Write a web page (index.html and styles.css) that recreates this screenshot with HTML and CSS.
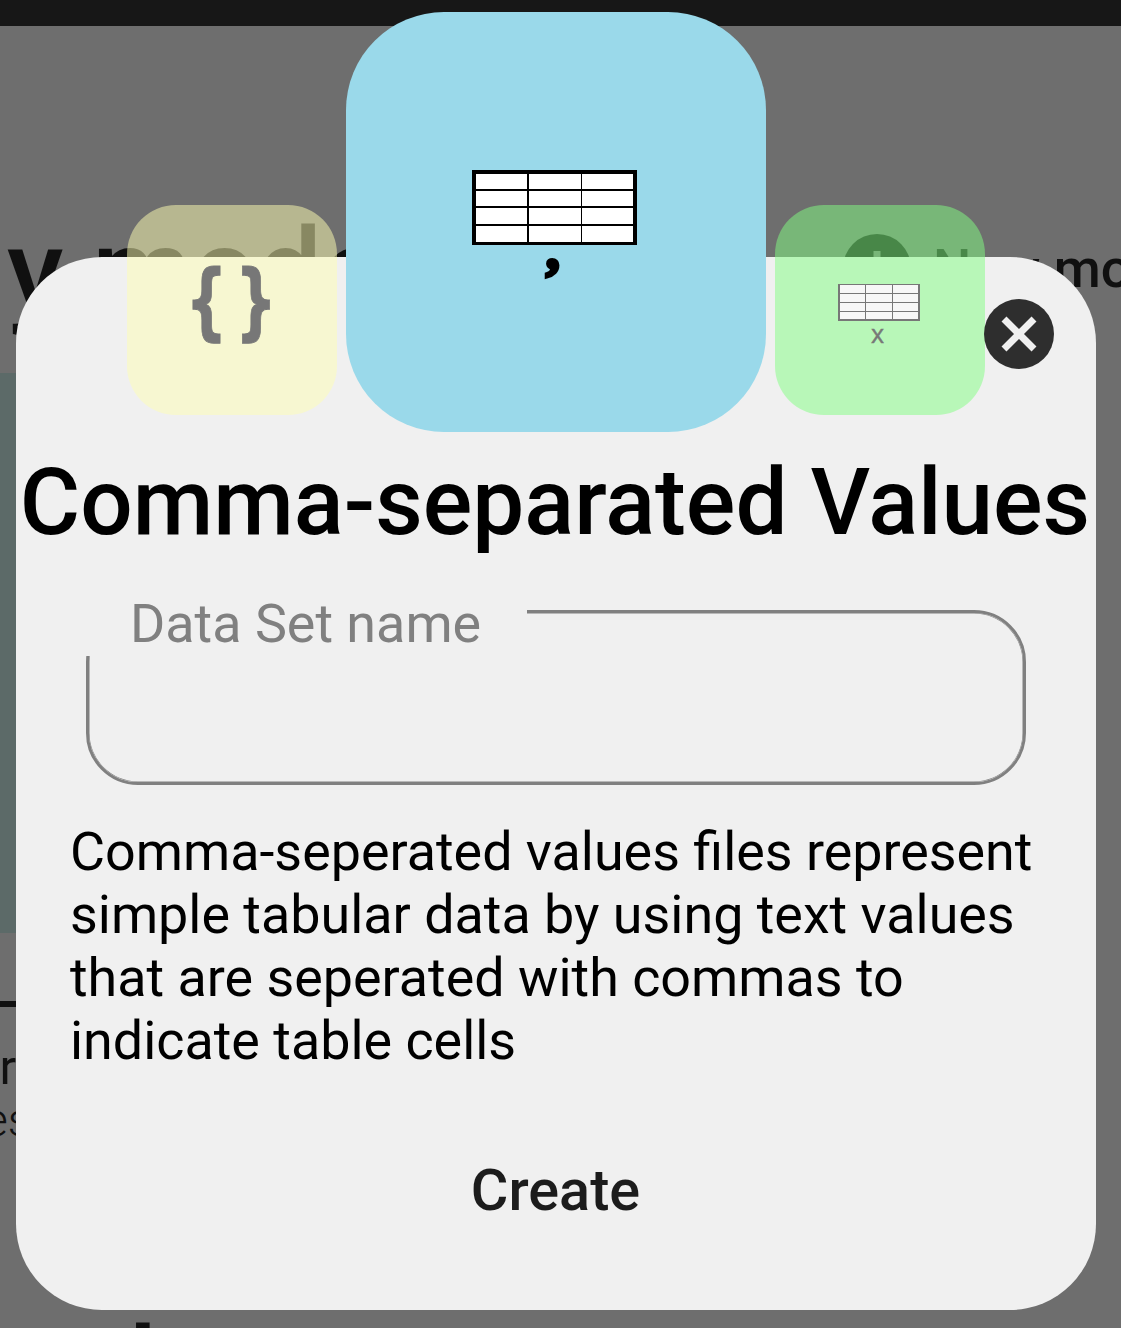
FILE: index.html
```html
<!DOCTYPE html>
<html lang="en">
<head>
<meta charset="utf-8">
<title>Create data set</title>
<link rel="stylesheet" href="styles.css">
</head>
<body>
<div class="app">
  <div class="statusbar"></div>
  <header class="header">
    <h1 class="page-title">y models</h1>
    <div class="new-model">
      <svg width="68" height="68" viewBox="0 0 68 68"><circle cx="34" cy="34" r="34" fill="#0f0f0f"/><path d="M34 17v34M17 34h34" stroke="#6e6e6e" stroke-width="7"/></svg>
      <span>New model</span>
    </div>
  </header>
  <div class="preview"></div>
  <div class="rule"></div>
  <div class="item-title">r</div>
  <div class="item-sub">es</div>
  <h2 class="next-title">d</h2>
</div>

<main class="dialog">
  <div class="tiles">
    <div class="tile tile-json">
      <svg width="210" height="210" viewBox="0 0 210 210"><g class="brace"><text x="58.5" y="125" textLength="42" lengthAdjust="spacingAndGlyphs">{</text><text x="108" y="125" textLength="42" lengthAdjust="spacingAndGlyphs">}</text></g></svg>
    </div>
    <div class="tile tile-csv">
      <svg width="420" height="420" viewBox="0 0 420 420" shape-rendering="crispEdges">
        <path fill="#000" d="M126 158h165v75H126z"/>
        <path fill="#fff" d="M130 162h51v15h-51zM183 162h52v15h-52zM236 162h51v15h-51zM130 179h51v15h-51zM183 179h52v15h-52zM236 179h51v15h-51zM130 196h51v16h-51zM183 196h52v16h-52zM236 196h51v16h-51zM130 214h51v16h-51zM183 214h52v16h-52zM236 214h51v16h-51z"/>
        <text class="comma" x="200" y="256">,</text>
      </svg>
    </div>
    <div class="tile tile-xlsx">
      <svg width="210" height="210" viewBox="0 0 210 210" shape-rendering="crispEdges">
        <path fill="#000" d="M63 79h82v37H63z"/>
        <path fill="#fff" d="M65 80h25v8H65zM91 80h26v8H91zM118 80h25v8h-25zM65 89h25v8H65zM91 89h26v8H91zM118 89h25v8h-25zM65 98h25v8H65zM91 98h26v8H91zM118 98h25v8h-25zM65 107h25v7H65zM91 107h26v7H91zM118 107h25v7h-25z"/>
        <text class="ex" x="96" y="138">x</text>
      </svg>
    </div>
  </div>
  <button class="close" aria-label="Close"><svg width="70" height="70" viewBox="0 0 70 70"><circle cx="35" cy="35" r="35" fill="#2e2e2e"/><path d="M20 20l30 30M50 20L20 50" stroke="#f0f0f0" stroke-width="7"/></svg></button>
  <h2 class="title">Comma-separated Values</h2>
  <div class="field"><label class="label">Data Set name</label></div>
  <p class="description">Comma-seperated values files represent simple tabular data by using text values that are seperated with commas to indicate table cells</p>
  <button class="create">Create</button>
</main>
</body>
</html>
```
FILE: styles.css
```css
* { box-sizing: border-box; }
body { margin: 0; width: 1121px; height: 1328px; position: relative; overflow: hidden; background: #6e6e6e; font-family: Roboto, sans-serif; color: #101010; }
h1, h2, p { margin: 0; font-weight: 500; }
button { border: 0; padding: 0; background: none; font-family: inherit; }
svg { display: block; }
.app { height: 1328px; overflow: hidden; white-space: nowrap; }
.statusbar { height: 26px; background: #171717; }
.header { display: flex; height: 347px; padding-top: 175px; }
.page-title { width: 738px; margin-left: 7px; padding-top: 4px; font-size: 115px; line-height: 132px; flex: none; }
.new-model { display: flex; align-items: flex-start; gap: 22px; margin-left: 98px; padding-top: 33px; font-size: 54px; font-weight: 500; line-height: 70px; flex: none; }
.preview { height: 560px; background: #5c6a68; width: 1000px; }
.rule { height: 6px; margin-top: 68px; width: 1000px; background: #101010; }
.item-title { width: 16px; margin-top: 33px; font-size: 49px; line-height: 56px; display: flex; justify-content: flex-end; }
.item-sub { width: 31px; margin-top: -1px; font-size: 46px; font-weight: 300; line-height: 50px; display: flex; justify-content: flex-end; }
.next-title { margin: 159px 0 0 92px; font-size: 115px; line-height: 132px; }

.dialog { position: absolute; left: 16px; top: 257px; width: 1080px; height: 1053px; border-radius: 86px; background: #f0f0f0; color: #000; }
.tiles { display: flex; justify-content: center; align-items: center; gap: 9px; height: 420px; margin-top: -245px; }
.tile { width: 210px; height: 210px; margin-top: 176px; border-radius: 49px; opacity: .5; flex: none; }
.tile-json { background: #ffffb3; }
.tile-csv { width: 420px; height: 420px; margin-top: 0; border-radius: 98px; background: #9ad9ea; opacity: 1; }
.tile-xlsx { background: #82ff82; }
.brace { font: 700 84px "DejaVu Sans", sans-serif; stroke: #000; stroke-width: 1px; }
.comma { font: 700 54px "Liberation Serif", serif; stroke: #000; stroke-width: 4px; }
.ex { font: 400 25px "Open Sans", sans-serif; stroke: #000; stroke-width: .5px; }
.close { position: absolute; left: 968px; top: 42px; width: 70px; height: 70px; }
.title { padding-top: 16px; margin-left: -2px; text-align: center; font-size: 92.5px; line-height: 110px; white-space: nowrap; }
.field { position: relative; width: 940px; height: 175px; margin: 52px 0 0 70px; border: 3px solid #808080; border-radius: 52px; box-shadow: inset 0 0 0 .5px #808080; }
.label { position: absolute; left: -4px; top: -30px; width: 442px; height: 73px; padding: 9px 0 0 45px; background: #f0f0f0; color: #808080; font-size: 53.85px; line-height: 64px; white-space: nowrap; }
.description { width: 980px; margin: 35px 0 0 54px; font-size: 53.85px; font-weight: 400; line-height: 63px; }
.create { display: block; margin: 86px auto 0; padding-right: 1px; font-size: 57.6px; font-weight: 500; line-height: 66px; color: #1c1c1c; }
```
